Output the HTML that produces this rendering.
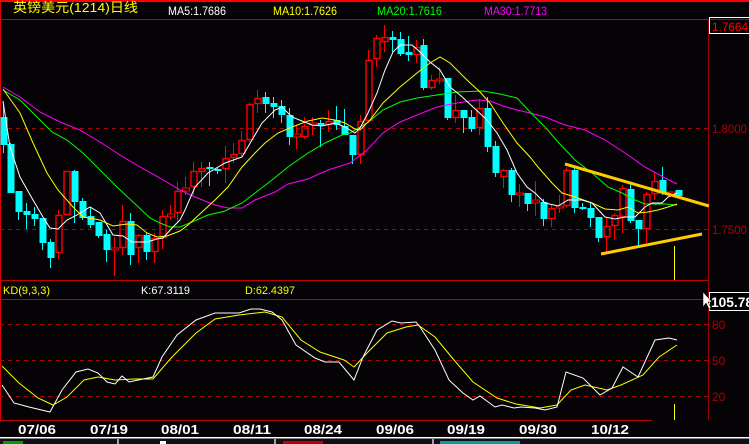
<!DOCTYPE html>
<html><head><meta charset="utf-8"><style>
html,body{margin:0;padding:0;background:#050305;}
body{width:749px;height:444px;overflow:hidden;position:relative;}
svg{position:absolute;left:0;top:0;}
text{font-family:"Liberation Sans","Noto Sans CJK SC",sans-serif;}
</style></head><body>
<svg id="s" width="749" height="444" viewBox="0 0 749 444" xmlns="http://www.w3.org/2000/svg">
<rect x="0" y="0" width="749" height="444" fill="#050305"/>
<rect x="0" y="0" width="749" height="2" fill="#ff0000"/>
<!-- frame -->
<line x1="0.5" y1="2" x2="0.5" y2="420" stroke="#e00000" stroke-width="1"/>
<line x1="0" y1="19.5" x2="749" y2="19.5" stroke="#c00000"/>
<line x1="708.5" y1="19" x2="708.5" y2="420" stroke="#a00000"/>
<line x1="0" y1="280.5" x2="708" y2="280.5" stroke="#c00000"/>
<line x1="0" y1="299.5" x2="708" y2="299.5" stroke="#c00000"/>
<line x1="0" y1="420.5" x2="652" y2="420.5" stroke="#c00000"/>
<!-- grid -->
<g stroke="#b00000" stroke-dasharray="4,4">
<line x1="0" y1="128.5" x2="708" y2="128.5"/>
<line x1="0" y1="229.5" x2="708" y2="229.5"/>
<line x1="0" y1="324.5" x2="708" y2="324.5"/>
<line x1="0" y1="360.5" x2="708" y2="360.5"/>
<line x1="0" y1="396.5" x2="708" y2="396.5"/>
</g>
<!-- legend -->
<text x="13" y="12" font-size="13" fill="#ffff00" textLength="125" lengthAdjust="spacingAndGlyphs">英镑美元(1214)日线</text>
<text x="168" y="15" font-size="12" fill="#ffffff" textLength="58" lengthAdjust="spacingAndGlyphs">MA5:1.7686</text>
<text x="273" y="15" font-size="12" fill="#ffff00" textLength="64" lengthAdjust="spacingAndGlyphs">MA10:1.7626</text>
<text x="377" y="15" font-size="12" fill="#00ff00" textLength="65" lengthAdjust="spacingAndGlyphs">MA20:1.7616</text>
<text x="484" y="15" font-size="12" fill="#ff00ff" textLength="63" lengthAdjust="spacingAndGlyphs">MA30:1.7713</text>
<!-- right axis labels -->
<path d="M709.5 34 V17.5 H749 M709 33.5 H749" stroke="#ffffff" fill="none"/>
<text x="712" y="31" font-size="12" fill="#ff0000" textLength="36" lengthAdjust="spacingAndGlyphs">1.7664</text>
<text x="712" y="133" font-size="12" fill="#b00000" textLength="35" lengthAdjust="spacingAndGlyphs">1.8000</text>
<text x="712" y="234" font-size="12" fill="#b00000" textLength="35" lengthAdjust="spacingAndGlyphs">1.7500</text>
<text x="712" y="329" font-size="12" fill="#b00000">80</text>
<text x="712" y="365" font-size="12" fill="#b00000">50</text>
<text x="712" y="401" font-size="12" fill="#b00000">20</text>
<rect x="709.5" y="292.5" width="42" height="18" fill="#000" stroke="#ffffff"/>
<text x="711" y="307" font-size="14" fill="#ffffff" font-weight="bold" textLength="42" lengthAdjust="spacingAndGlyphs">105.78</text>
<path d="M703 292 L703 307 L706 303 L709 309 L711 308 L708 302 L712 302 Z" fill="#ffffff" stroke="#000" stroke-width="0.5"/>
<!-- KD legend -->
<text x="3" y="294" font-size="11" fill="#ffff00" textLength="47" lengthAdjust="spacingAndGlyphs">KD(9,3,3)</text>
<text x="141" y="294" font-size="11" fill="#ffffff" textLength="49" lengthAdjust="spacingAndGlyphs">K:67.3119</text>
<text x="245" y="294" font-size="11" fill="#ffff00" textLength="50" lengthAdjust="spacingAndGlyphs">D:62.4397</text>
<!-- dates -->
<g font-family="Liberation Mono, monospace" font-weight="bold" font-size="13" fill="#ffffff">
<text x="18" y="434" textLength="38" lengthAdjust="spacingAndGlyphs">07/06</text>
<text x="90" y="434" textLength="38" lengthAdjust="spacingAndGlyphs">07/19</text>
<text x="161" y="434" textLength="38" lengthAdjust="spacingAndGlyphs">08/01</text>
<text x="233" y="434" textLength="38" lengthAdjust="spacingAndGlyphs">08/11</text>
<text x="304" y="434" textLength="38" lengthAdjust="spacingAndGlyphs">08/24</text>
<text x="376" y="434" textLength="38" lengthAdjust="spacingAndGlyphs">09/06</text>
<text x="447" y="434" textLength="38" lengthAdjust="spacingAndGlyphs">09/19</text>
<text x="519" y="434" textLength="38" lengthAdjust="spacingAndGlyphs">09/30</text>
<text x="591" y="434" textLength="38" lengthAdjust="spacingAndGlyphs">10/12</text>
</g>
<!-- status bar -->
<rect x="0" y="437" width="749" height="1.5" fill="#ffffff"/>
<rect x="0" y="439" width="749" height="5" fill="#101018"/>
<g fill="#a0a0a0"><rect x="117" y="439" width="2" height="5"/><rect x="274" y="439" width="2" height="5"/><rect x="432" y="439" width="2" height="5"/></g>
<rect x="3" y="441" width="20" height="3" fill="#00a000"/>
<rect x="160" y="441" width="6" height="3" fill="#ffffff"/>
<rect x="283" y="441" width="40" height="3" fill="#c00000"/>
<rect x="440" y="441" width="80" height="3" fill="#00a0a0"/>
<g id="candles"></g>
<g id="lines" fill="none" stroke-width="1"></g>
<!-- trendlines -->
<line x1="565" y1="164" x2="709" y2="206" stroke="#ffcc00" stroke-width="3"/>
<line x1="601" y1="254" x2="702" y2="234" stroke="#ffcc00" stroke-width="3"/>
<line x1="674.5" y1="246" x2="674.5" y2="280" stroke="#ffff00"/>
<line x1="674.5" y1="404" x2="674.5" y2="420" stroke="#ffff00"/>
</svg>
<script>
var c=[
[3,117,145,105,153,'c'],[10,144,193,143,193,'c'],[18,191,212,191,220,'c'],[26,211,215,203,229,'c'],[34,214,219,207,226,'c'],[42,218,243,218,250,'c'],[50,242,258,239,268,'c'],[58,215,253,210,259,'r'],[66,171,215,171,215,'r'],[74,171,202,170,223,'c'],[82,201,218,198,220,'c'],[90,216,225,207,228,'c'],[98,222,236,222,238,'c'],[106,234,250,230,262,'c'],[114,248,250,237,276,'r'],[122,221,248,205,255,'r'],[130,221,255,213,265,'c'],[138,235,248,234,263,'r'],[146,235,252,233,260,'c'],[154,238,252,233,263,'r'],[162,216,238,210,249,'r'],[170,214,217,205,220,'r'],[177,191,213,182,222,'r'],[185,188,191,177,195,'r'],[193,171,187,162,195,'r'],[201,168,172,162,187,'r'],[209,167,169,162,186,'c'],[217,169,171,167,174,'c'],[225,158,169,146,183,'r'],[233,154,158,143,163,'r'],[241,140,154,131,157,'r'],[249,104,140,103,142,'r'],[257,98,104,90,113,'r'],[265,97,104,92,113,'c'],[273,103,107,97,118,'c'],[281,106,115,100,123,'c'],[289,115,137,108,145,'c'],[296,134,137,126,149,'r'],[304,126,137,117,139,'r'],[312,123,125,117,135,'r'],[320,123,126,120,147,'c'],[328,121,125,110,132,'r'],[336,120,125,106,130,'c'],[344,126,135,109,135,'c'],[352,135,155,135,164,'c'],[360,121,155,115,164,'r'],[368,60,121,50,123,'r'],[376,38,59,35,67,'r'],[384,37,42,25,52,'r'],[392,37,40,31,52,'c'],[400,39,54,32,56,'c'],[408,52,55,36,61,'c'],[416,47,55,40,63,'r'],[423,45,88,39,90,'c'],[431,80,88,75,90,'r'],[439,79,80,67,84,'r'],[447,78,118,78,120,'c'],[455,110,118,95,123,'r'],[463,110,118,110,133,'c'],[471,117,129,110,132,'c'],[479,108,128,99,135,'r'],[487,108,147,97,152,'c'],[495,146,173,141,177,'c'],[503,170,177,169,188,'r'],[511,170,195,168,202,'c'],[519,193,195,184,207,'r'],[527,193,204,193,211,'c'],[535,200,203,181,216,'r'],[543,202,219,199,226,'c'],[551,208,219,205,227,'r'],[559,206,208,195,213,'r'],[566,170,206,167,208,'r'],[574,170,208,168,213,'c'],[582,207,209,203,210,'c'],[590,208,218,202,227,'c'],[598,217,238,217,242,'c'],[606,226,237,217,252,'r'],[614,215,226,213,240,'r'],[622,188,217,185,233,'r'],[630,189,221,183,223,'c'],[638,220,229,220,245,'c'],[646,194,229,192,243,'r'],[654,181,194,173,200,'r'],[662,180,192,167,195,'c'],[670,192,194,191,197,'r'],[678,190,196,190,196,'c']];
var h='';
c.forEach(function(d){var x=d[0],t=d[1],b=d[2],hi=d[3],lo=d[4];
if(d[5]=='c'){h+='<line x1="'+(x+.5)+'" y1="'+hi+'" x2="'+(x+.5)+'" y2="'+lo+'" stroke="#00ffff"/>';
h+='<rect x="'+(x-2.5)+'" y="'+t+'" width="7" height="'+Math.max(2,b-t)+'" fill="#00ffff"/>';}
else{h+='<line x1="'+(x+.5)+'" y1="'+hi+'" x2="'+(x+.5)+'" y2="'+t+'" stroke="#ff0000"/>';
h+='<line x1="'+(x+.5)+'" y1="'+b+'" x2="'+(x+.5)+'" y2="'+lo+'" stroke="#ff0000"/>';
if(b-t<=3){h+='<rect x="'+(x-2.5)+'" y="'+t+'" width="7" height="'+Math.max(2,b-t)+'" fill="none" stroke="#ff0000"/>';}
else h+='<rect x="'+(x-2)+'" y="'+(t+.5)+'" width="6" height="'+(b-t-1)+'" fill="none" stroke="#ff0000" stroke-width="1.4"/>';}
});
document.getElementById('candles').innerHTML=h;
var L={
'#ff00ff':'3,87 20,97 40,112 60,122 80,130 100,142 120,155 140,167 160,178 180,190 195,197 215,205 228,208 242,208 255,200 275,192 288,184 308,179 328,170 350,163 367,150 383,133 400,122 417,115 437,107 457,103 477,100 490,101 503,106 517,110 530,113 545,117 565,125 585,130 605,140 625,153 645,167 665,178 677,184',
'#00ff00':'3,90 20,100 33,113 52,132 67,140 83,153 100,170 117,187 133,202 150,218 160,223 170,227 180,227 192,222 208,215 225,211 242,203 255,193 272,180 288,167 308,153 325,143 342,135 350,133 367,123 383,110 400,102 417,98 437,95 457,92 483,91 500,94 517,98 530,112 545,127 558,142 575,160 592,173 608,187 622,193 635,200 645,204 665,204 677,205',
'#ffff00':'3,89 20,113 33,143 47,173 58,190 73,207 83,217 100,220 113,226 127,224 137,225 147,233 157,237 167,236 180,231 188,225 202,212 215,200 228,187 242,167 255,153 265,143 278,133 292,127 308,121 322,118 335,120 345,123 355,129 360,130 370,120 383,103 400,87 417,73 430,63 440,57 450,63 467,80 480,92 490,103 503,123 517,143 530,157 538,167 552,183 562,193 575,197 592,203 605,209 618,210 628,207 638,213 648,212 658,210 668,207 677,204',
'#ffffff':'3,101 10,147 20,177 33,200 43,217 50,228 58,229 67,220 77,215 90,207 100,213 113,235 123,236 132,242 147,242 157,239 163,238 173,227 180,220 185,210 195,187 208,173 225,163 242,157 252,140 262,123 275,110 282,107 292,117 302,121 312,125 322,126 335,123 345,127 355,133 360,128 368,113 377,93 385,70 393,52 400,45 412,45 420,52 430,62 440,70 450,87 460,95 473,107 487,120 497,133 507,150 517,173 527,187 535,193 545,203 558,206 568,200 582,200 592,203 605,217 615,219 625,217 635,217 645,207 652,203 662,203 668,197 677,193'
};
var K='2,385 14,403 29,407 50,412 62,390 76,372 88,369 98,373 107,382 115,384 122,376 129,382 143,379 153,377 162,357 177,335 196,320 215,313 229,313 239,313 251,309 260,309 272,312 282,320 296,345 315,358 325,362 339,362 354,380 363,357 377,330 392,321 401,323 416,322 420,327 435,350 449,380 463,393 473,400 480,396 495,407 502,405 514,408 521,407 535,408 545,410 557,407 566,372 583,378 600,395 612,388 623,367 638,377 655,340 669,338 677,340';
var D='2,366 19,383 38,398 53,405 67,397 84,380 98,377 115,380 134,379 153,379 172,357 196,333 215,319 239,315 265,312 282,317 301,340 320,352 344,360 354,367 368,352 387,333 406,327 418,325 435,337 454,360 473,382 497,398 516,404 540,408 557,405 571,390 585,385 607,390 621,385 643,375 659,357 677,345';
var g='';for(var k in L)g+='<polyline points="'+L[k]+'" stroke="'+k+'"/>';
g+='<polyline points="'+D+'" stroke="#ffff00"/><polyline points="'+K+'" stroke="#ffffff"/>';
document.getElementById('lines').innerHTML=g;
</script>
</body></html>
